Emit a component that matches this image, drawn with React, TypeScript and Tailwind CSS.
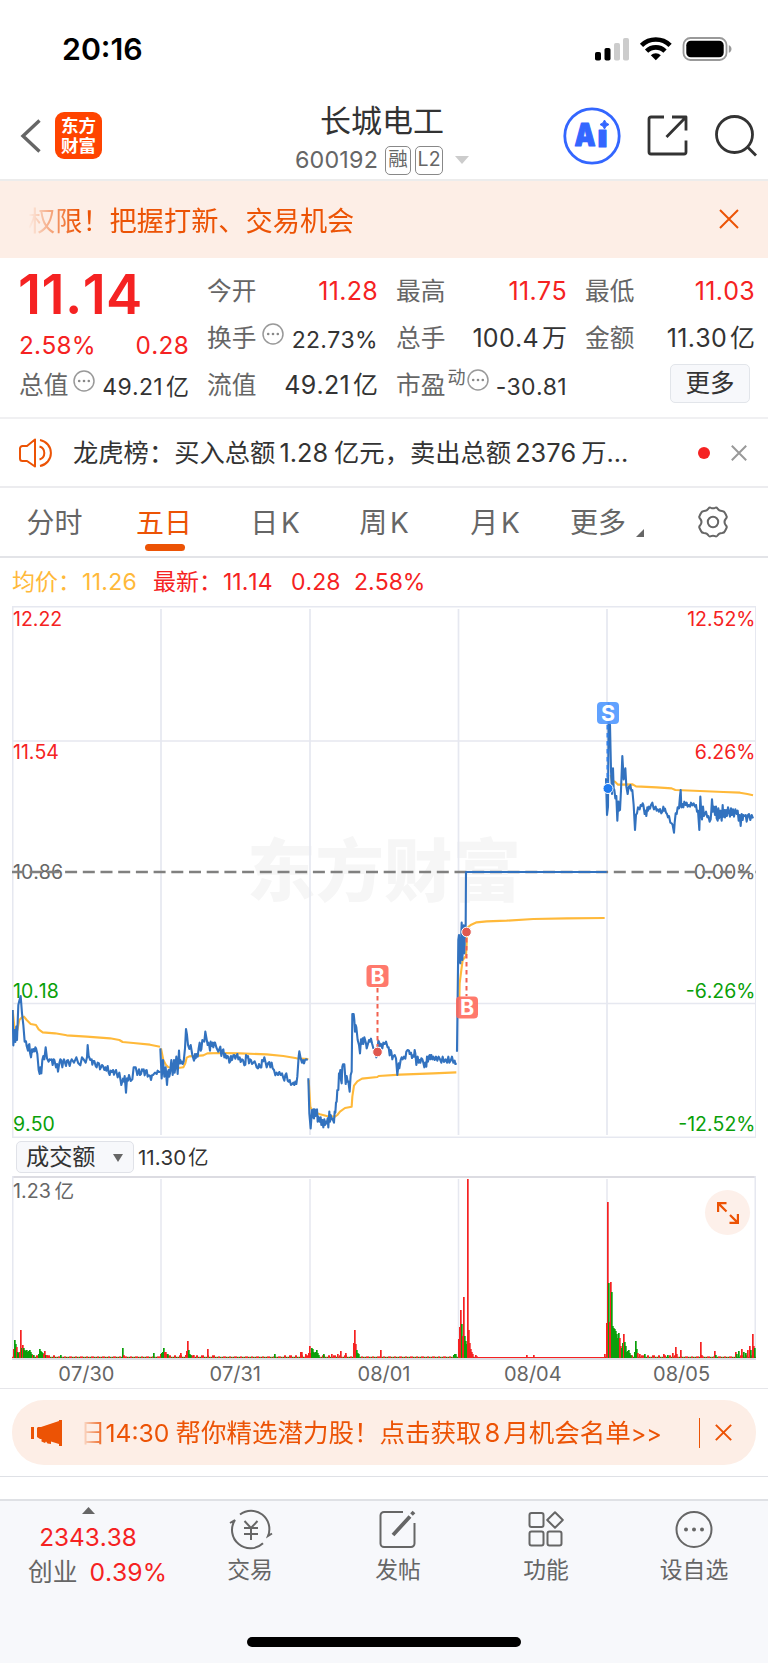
import type { ReactNode } from "react";

const tabs = [
  { label: "分时", width: "w-[109px]" },
  { label: "五日", width: "w-[110px]", active: true },
  { label: "日 K", width: "w-[112px]" },
  { label: "周 K", width: "w-[106px]" },
  { label: "月 K", width: "w-[116px]" },
];

const dates = ["07/30", "07/31", "08/01", "08/04", "08/05"];

// Each session is sampled on a grid of three units per pixel, from its own origin.
const sessions = [
  {
    origin: "translate(-12 374) scale(0.33333)",
    average:
      "38,90 44,150 52,150 58,120 66,112 72,110 80,120 92,132 108,135 116,148 128,157 165,160 200,166 260,170 330,175 358,180 368,186 400,189 450,194 480,200",
    price:
      "38,90 40,196 43,150 46,186 49,140 51,180 55,75 58,62 62,48 66,100 70,135 74,185 78,184 80,198 84,212 86,195 88,192 90,218 93,232 96,208 98,216 101,207 104,214 106,202 108,205 112,222 116,270 119,282 121,262 124,280 127,240 130,228 133,238 137,202 141,235 146,245 149,238 152,240 155,238 158,255 161,238 163,240 168,262 171,252 174,275 178,250 181,238 183,240 187,262 190,242 192,238 198,258 201,242 204,240 209,258 212,245 215,238 222,248 229,232 235,250 241,256 246,232 252,240 257,248 261,232 263,195 266,228 271,240 275,238 277,254 280,243 283,243 287,258 290,262 293,248 297,250 300,268 303,262 306,255 309,258 313,270 316,262 319,272 323,258 326,278 329,285 332,272 336,276 339,270 342,284 345,275 348,270 353,292 358,278 364,315 369,296 372,305 374,288 378,338 381,295 384,302 387,285 392,303 397,298 401,262 407,262 410,275 412,285 417,268 420,285 423,282 426,268 428,272 431,268 434,286 437,272 440,270 443,290 446,286 450,287 453,300 456,286 459,285 465,278 470,282 473,272 476,276 482,275",
  },
  {
    origin: "translate(-12 374) scale(0.33333)",
    average:
      "483,205 490,240 498,255 505,262 530,265 550,262 556,250 560,233 568,229 610,226 622,220 660,219 720,220 800,223 850,228 890,235 925,237",
    price:
      "481,205 485,295 489,240 493,290 497,262 501,315 504,275 506,270 508,290 510,280 514,240 516,262 518,285 522,240 524,278 526,262 529,230 533,282 537,212 539,250 541,240 543,250 546,245 548,252 551,245 555,205 558,147 561,165 564,195 568,207 572,195 577,225 582,242 585,222 587,235 590,222 593,230 596,205 599,188 602,212 604,208 607,180 609,182 613,185 616,155 620,178 623,195 625,188 628,198 630,212 632,185 635,198 638,188 640,202 643,188 645,188 650,205 655,215 661,200 664,228 667,212 670,208 673,232 676,222 679,235 682,228 685,230 688,248 691,244 693,228 696,240 700,226 703,225 706,236 709,228 712,222 715,238 719,232 722,246 726,238 729,240 733,256 736,254 738,225 741,232 744,228 747,250 750,238 753,240 756,252 760,248 764,244 767,252 770,262 774,265 777,252 781,262 784,262 786,240 790,244 793,232 797,248 800,262 804,250 808,246 811,262 815,248 818,265 822,270 826,286 830,278 834,285 838,276 842,285 846,280 850,294 853,302 856,285 859,280 863,302 866,305 869,300 873,315 877,312 880,308 883,315 886,305 889,312 892,290 896,230 898,214 902,235 906,248 909,240 912,250 915,240 918,238 923,240",
  },
  {
    origin: "translate(288 334) scale(0.33333)",
    average:
      "26,420 31,500 38,515 60,523 80,528 105,530 112,525 120,515 135,504 155,500 157,470 162,437 172,424 186,416 232,411 236,408 300,404 400,400 469,397",
    price:
      "25,415 28,520 32,565 36,510 38,532 40,508 42,535 44,508 46,528 48,512 51,508 53,545 55,530 59,545 62,532 64,555 67,540 70,562 73,538 75,555 78,545 80,550 83,535 85,562 88,515 90,545 92,525 95,538 97,535 102,548 104,515 106,518 108,488 110,485 112,450 115,450 117,400 119,405 121,390 123,420 125,430 127,380 129,373 133,373 135,400 137,432 140,408 143,425 145,424 149,455 152,405 155,395 157,222 161,222 163,240 165,275 167,255 169,262 173,300 177,315 180,340 183,298 185,312 188,295 190,312 193,292 198,310 200,325 203,315 207,300 210,305 213,296 216,310 220,325 225,328 229,352 233,325 235,302 238,308 240,318 243,312 247,325 250,308 254,312 258,305 263,322 266,322 269,346 272,330 274,335 277,358 279,350 284,345 288,355 292,405 296,370 298,385 302,360 305,352 308,358 312,350 316,356 319,335 323,330 327,332 329,342 333,338 336,354 340,345 342,350 344,330 346,340 349,375 353,350 356,368 358,360 361,368 364,355 367,358 370,368 373,382 376,368 379,380 381,350 384,365 386,350 389,345 391,358 394,345 397,358 400,350 404,360 408,350 412,362 416,350 420,358 424,368 428,350 432,366 437,358 441,368 445,350 448,368 452,362 456,350 460,368 464,362 466,372 470,370",
  },
  {
    origin: "translate(288 334) scale(0.33333)",
    average:
      "478,180 479,130 484,90 488,60 498,48 500,10 500,-35 512,-45 530,-53 560,-56 620,-58 700,-63 800,-65 914,-66",
    price:
      "471,335 475,0 477,-15 479,60 481,70 485,-52 487,60 489,20 491,-44 493,40 495,-20 497,-35 498,-204 920,-204",
  },
  {
    origin: "translate(578 84) scale(0.33333)",
    average:
      "62,255 66,272 75,275 84,284 128,283 138,289 200,292 245,295 256,300 330,303 400,306 450,308 472,312 489,316",
    price:
      "48,265 51,375 54,350 56,40 58,100 60,105 63,240 66,312 69,235 71,295 73,300 76,325 79,318 82,392 85,335 87,362 90,360 93,300 97,198 101,268 104,245 106,235 109,290 113,312 116,290 118,295 121,285 124,302 127,300 131,345 135,420 138,375 141,370 144,352 149,358 152,345 155,348 158,340 160,345 164,372 167,362 169,378 172,352 174,362 177,350 180,356 183,345 187,338 190,352 192,358 197,350 200,362 203,358 207,365 210,357 214,370 217,365 220,350 222,362 225,356 228,368 231,372 234,382 237,378 241,398 245,400 248,405 252,428 254,398 257,370 260,372 263,352 267,355 270,318 272,300 274,352 277,342 280,352 283,335 287,345 290,338 293,350 296,345 300,350 303,338 307,346 311,340 315,350 318,345 321,365 324,362 328,420 331,320 334,370 336,388 339,350 342,378 345,370 348,365 352,382 355,378 359,395 362,388 364,362 366,328 369,365 372,350 375,375 378,350 380,385 383,392 385,355 387,385 391,362 395,392 398,345 400,380 403,360 405,382 408,360 411,378 414,352 417,365 420,380 423,355 426,375 429,358 432,380 436,358 440,372 443,362 446,392 449,375 452,408 455,372 458,390 460,375 463,378 467,375 470,395 474,375 477,372 481,390 485,375 489,385",
  },
];

// [x, height, up?]
const spikes: [number, number, number][] = [
  [1, 9, 1], [2, 18, 0], [3, 14, 0], [4, 11, 1], [5, 6, 0], [6, 5, 0], [7, 6, 1], [8, 28, 1], [9, 10, 0], [10, 13, 1], [11, 10, 0], [12, 8, 0], [13, 7, 0], [14, 8, 0], [15, 6, 0], [16, 7, 0], [17, 8, 0], [18, 6, 0], [19, 4, 0], [20, 3, 1], [21, 3, 0],
  [26, 4, 0], [27, 9, 0], [28, 7, 0], [29, 6, 0], [30, 5, 0], [31, 4, 1], [32, 7, 1], [33, 3, 0], [34, 3, 1], [48, 3, 0], [110, 10, 0], [111, 3, 1], [141, 5, 0], [148, 4, 1], [149, 5, 0], [150, 6, 0], [151, 10, 0], [152, 6, 1], [153, 6, 1], [154, 4, 1], [155, 4, 0],
  [168, 5, 1], [173, 3, 1], [174, 7, 1], [175, 17, 1], [176, 8, 0], [177, 4, 0], [178, 3, 0], [181, 3, 1], [195, 9, 1], [262, 4, 0], [288, 6, 1], [289, 6, 1], [293, 4, 1], [296, 5, 1], [297, 12, 1], [298, 5, 1], [299, 10, 0], [300, 9, 0], [301, 6, 0], [302, 5, 0], [303, 6, 0], [304, 8, 0], [305, 5, 0], [306, 3, 0],
  [311, 4, 0], [319, 4, 1], [325, 4, 1], [328, 7, 1], [333, 5, 1], [341, 15, 1], [342, 28, 1], [343, 14, 1], [344, 8, 0], [345, 5, 0], [346, 4, 0], [368, 8, 1], [441, 3, 0], [442, 4, 0], [443, 4, 0],
  [446, 19, 1], [447, 31, 1], [448, 48, 1], [449, 34, 0], [450, 22, 1], [451, 61, 1], [452, 22, 0], [453, 17, 0], [454, 14, 0], [455, 179, 1], [456, 28, 1], [457, 15, 1], [458, 9, 1], [459, 6, 1], [460, 4, 1], [463, 3, 1],
  [514, 3, 1], [521, 3, 1], [592, 4, 1], [594, 35, 1], [595, 156, 1], [596, 75, 0], [597, 36, 1], [598, 76, 1], [599, 66, 0], [600, 32, 0], [601, 30, 0], [602, 29, 0], [603, 27, 0], [604, 24, 0], [605, 20, 0], [606, 25, 0], [607, 20, 1], [608, 12, 1], [609, 10, 0], [610, 15, 0], [611, 24, 1], [612, 16, 0], [613, 12, 0], [614, 6, 0], [615, 7, 0], [616, 8, 0], [617, 5, 0], [618, 3, 0],
  [622, 6, 0], [623, 17, 0], [624, 9, 0], [625, 5, 1], [627, 4, 1], [632, 4, 0], [651, 4, 1], [655, 3, 0], [660, 5, 1], [663, 11, 1], [664, 4, 1], [668, 8, 1], [688, 16, 1], [689, 3, 1], [702, 7, 1], [703, 3, 0], [723, 6, 1], [724, 4, 0], [726, 7, 0], [729, 9, 1], [731, 6, 0], [733, 5, 0], [735, 8, 1], [737, 12, 1], [738, 8, 0], [740, 24, 1], [741, 12, 1], [742, 10, 0],
];

const quiet = Array.from({ length: 744 }, (_, x) => {
  const wave = (x * 7919 + 13 * x * x) % 11;
  const frozen = x > 465 && x < 592;
  const busy = (x > 20 && x < 45) || (x > 150 && x < 205) || (x > 270 && x < 335) || (x > 594 && x < 665) || x > 722;
  return { x, h: frozen ? 1 : wave < 4 ? 1.2 : busy ? 2.7 : 1.6, up: frozen || wave % 2 === 0 };
});

function Dots() {
  return (
    <svg width="22" height="22" viewBox="0 0 22 22" fill="none" stroke="#999" strokeWidth="1.5">
      <circle cx="11" cy="11" r="10" />
      <g fill="#888" stroke="none">
        <circle cx="6.2" cy="11" r="1.3" />
        <circle cx="11" cy="11" r="1.3" />
        <circle cx="15.8" cy="11" r="1.3" />
      </g>
    </svg>
  );
}

function Cross({ size, color, width = 2 }: { size: number; color: string; width?: number }) {
  return (
    <svg width={size} height={size} viewBox="0 0 20 20" stroke={color} strokeWidth={(width * 20) / size}>
      <path d="M1 1 19 19M19 1 1 19" />
    </svg>
  );
}

type QuoteProps = { label: string; value: string; unit?: string; mark?: ReactNode; red?: boolean; small?: boolean };

function Quote({ label, value, unit, mark, red, small }: QuoteProps) {
  return (
    <div className="flex h-[47px] items-center justify-between">
      <span className="flex items-center text-[24.7px] text-[#666]">
        {label}
        {mark}
      </span>
      <span className={`${small ? "pt-1 text-[23px]" : "text-[25px]"} ${red ? "text-[#f52222]" : "text-[#333]"} -mr-px flex items-center`}>
        <span className="tracking-[0.3px]">{value}</span>
        {unit && <span className="ml-[3px]">{unit}</span>}
      </span>
    </div>
  );
}

function Marker({ x, y, letter, color }: { x: number; y: number; letter: string; color: string }) {
  return (
    <g>
      <rect x={x} y={y} width="22" height="22" rx="4" fill={color} fillOpacity="0.9" />
      <text x={x + 11} y={y + 18.5} textAnchor="middle" fontSize="21.5" fontWeight="700" fill="#fff">
        {letter}
      </text>
    </g>
  );
}

function StatusBar() {
  return (
    <div className="flex h-[90px] items-center justify-between pt-[7px] pr-[36px] pl-[62px]">
      <span className="pt-[2px] text-[30.3px] font-semibold text-black">20:16</span>
      <svg width="137" height="26" viewBox="0 0 137 26">
        <rect x="0" y="16" width="6" height="8.5" rx="1.8" />
        <rect x="9.5" y="12" width="6" height="12.5" rx="1.8" />
        <rect x="19" y="7" width="6" height="17.5" rx="1.8" fill="#ccc" />
        <rect x="28" y="2" width="6" height="22.5" rx="1.8" fill="#ccc" />
        <g fill="none" stroke="#000" strokeWidth="4.6">
          <path d="M46.5 9.3a20.5 20.5 0 0 1 28.6 0" />
          <path d="M51.6 15.2a13 13 0 0 1 18.4 0" />
        </g>
        <path d="M60.8 24.3 55.8 19.2a7.3 7.3 0 0 1 10 0z" />
        <rect x="88.5" y="2" width="43" height="22" rx="7" fill="none" stroke="#999" strokeWidth="1.8" />
        <rect x="91.3" y="4.8" width="37.4" height="16.4" rx="4.5" />
        <path d="M133.8 9.2c3.6 1 3.6 6.6 0 7.6z" fill="#999" />
      </svg>
    </div>
  );
}

function Header() {
  return (
    <header className="flex h-[91px] items-center border-b-2 border-[#ececec] pt-[2px] pr-[11px] pl-[20px]">
      <svg width="21" height="36" viewBox="0 0 21 36" fill="none" stroke="#666" strokeWidth="3.4">
        <path d="M19.5 2.5 3 18 19.5 33.5" />
      </svg>
      <div className="ml-[14px] flex h-[47px] w-[47px] flex-col items-center justify-center rounded-[9px] bg-[#ff4400] text-[17.5px] leading-[20px] font-bold text-white">
        <span>东方</span>
        <span>财富</span>
      </div>
      <div className="ml-[191px] flex h-[89px] w-[178px] flex-col items-center pt-[11px]">
        <h1 className="text-[31px] leading-[38px] text-[#333]">长城电工</h1>
        <div className="flex h-[45px] items-center text-[#666]">
          <span className="mr-[7px] text-[23.3px] tracking-[0.2px]">600192</span>
          <span className="mr-[4px] flex h-[29px] w-[26px] items-center justify-center rounded-[5px] border-[1.5px] border-[#888] text-[19.5px]">融</span>
          <span className="mr-[12px] flex h-[29px] w-[28px] items-center justify-center rounded-[5px] border-[1.5px] border-[#888] text-[19.5px]">L2</span>
          <svg width="14" height="8" viewBox="0 0 14 8" fill="#ccc">
            <path d="M0 0h14L7 8z" />
          </svg>
        </div>
      </div>
      <svg className="ml-auto" width="58" height="58" viewBox="0 0 58 58" fill="#3366ff">
        <circle cx="29" cy="29" r="27.2" fill="none" stroke="#3366ff" strokeWidth="2.8" />
        <g fontWeight="900" stroke="#3366ff" strokeWidth="1.2" strokeLinejoin="round">
          <text x="11.5" y="39" fontSize="32" textLength="21" lengthAdjust="spacingAndGlyphs">
            A
          </text>
          <text x="34.5" y="39.5" fontSize="30" textLength="10" lengthAdjust="spacingAndGlyphs">
            ı
          </text>
        </g>
        <path d="M41.5 13q1 3.500 4.500 4.500-3.500 1-4.500 4.500-1-3.500-4.500-4.500 3.500-1 4.500-4.500z" stroke="#3366ff" />
      </svg>
      <svg className="ml-[26px]" width="41" height="41" viewBox="0 0 41 41" fill="none" stroke="#333" strokeWidth="2.8" strokeLinejoin="round">
        <path d="M17 2H4a2 2 0 0 0-2 2v33a2 2 0 0 0 2 2h33a2 2 0 0 0 2-2V25.500M25 2h14v13.500M38 3 19.500 22" />
      </svg>
      <svg className="ml-[27px]" width="42" height="42" viewBox="0 0 42 42" fill="none" stroke="#333" strokeWidth="2.8">
        <circle cx="19.5" cy="19.5" r="18" />
        <path d="M32 31.5 41 40.5" />
      </svg>
    </header>
  );
}

function Quotes() {
  return (
    <section className="grid h-[161px] grid-cols-[169px_170px_170px_169px] gap-x-[19px] border-b-2 border-[#f0f0f2] pt-[10px] pl-[19px]">
      <div className="text-[#f52222]">
        <div className="-ml-px flex h-[52px] items-center text-[54.5px] leading-[52px] font-semibold tracking-[0.4px]">11.14</div>
        <div className="flex h-[50px] items-center justify-between pt-[1px] text-[24.3px]">
          <span className="tracking-[0.3px]">2.58%</span>
          <span className="-mr-px tracking-[0.3px]">0.28</span>
        </div>
        <div className="-mt-[8px]">
          <Quote label="总值" value="49.21" unit="亿" small mark={<span className="mb-[9px] ml-[5px]"><Dots /></span>} />
        </div>
      </div>
      <div>
        <Quote label="今开" value="11.28" red />
        <Quote label="换手" value="22.73%" small mark={<span className="mb-[9px] ml-[6px]"><Dots /></span>} />
        <Quote label="流值" value="49.21" unit="亿" />
      </div>
      <div>
        <Quote label="最高" value="11.75" red />
        <Quote label="总手" value="100.4" unit="万" />
        <Quote
          label="市盈"
          value="-30.81"
          small
          mark={
            <span className="mb-[12px] ml-[2px] flex items-center text-[18px]">
              <span className="mb-[3px]">动</span>
              <span className="ml-[2px]"><Dots /></span>
            </span>
          }
        />
      </div>
      <div>
        <Quote label="最低" value="11.03" red />
        <Quote label="金额" value="11.30" unit="亿" />
        <button className="mt-[2px] mr-[4px] ml-auto flex h-[39px] w-[80px] items-center justify-center rounded-[5px] border-[1.5px] border-[#e2e5ea] bg-[#f7f8fb] text-[24.5px] text-[#333]">
          更多
        </button>
      </div>
    </section>
  );
}

function Chart() {
  return (
    <svg className="mx-[12px] block" width="744" height="532" viewBox="0 0 744 532">
      <text x="235" y="290" fontSize="68.5" fontWeight="900" fill="#f6f6f6">
        东方财富
      </text>
      <g fill="none" stroke="#e6e8f0" strokeWidth="1.5">
        <rect x="0.75" y="0.75" width="743" height="530.5" />
        <path d="M0 135H744M0 397.5H744M149 3V529M298 3V529M446.5 3V529M595 3V529" strokeWidth="1.7" />
      </g>
      <g fontSize="19.5">
        <text x="1" y="20" fill="#f52222">12.22</text>
        <text x="1" y="152.5" fill="#f52222">11.54</text>
        <text x="1" y="273" fill="#666">10.86</text>
        <text x="1" y="392" fill="#0a9f0a">10.18</text>
        <text x="1" y="524.5" fill="#0a9f0a">9.50</text>
        <g textAnchor="end">
          <text x="743.5" y="20" fill="#f52222">12.52%</text>
          <text x="743.5" y="152.5" fill="#f52222">6.26%</text>
          <text x="743.5" y="273" fill="#666">0.00%</text>
          <text x="743.5" y="392" fill="#0a9f0a">-6.26%</text>
          <text x="743.5" y="524.5" fill="#0a9f0a">-12.52%</text>
        </g>
      </g>
      <path d="M0 266H744" stroke="#80807f" strokeWidth="2.4" strokeDasharray="12 5.7" />
      {sessions.map((s, i) => (
        <g key={i} transform={s.origin} fill="none" strokeWidth="6.3" strokeLinejoin="round">
          <polyline points={s.average} stroke="#ffb93a" />
          <polyline points={s.price} stroke="#3272bf" />
        </g>
      ))}
      <g strokeWidth="2" strokeDasharray="4.5 3.5" stroke="#f2604f">
        <path d="M365.5 382V441M454.5 332V390" />
        <path d="M595.5 119V178" stroke="#2f7fe8" />
      </g>
      <g stroke="#fff" strokeWidth="1">
        <circle cx="365.5" cy="446" r="4.8" fill="#e0584f" />
        <circle cx="454.5" cy="326" r="4.8" fill="#e0584f" />
        <circle cx="596" cy="182.5" r="5" fill="#1f7bf0" />
      </g>
      <Marker x={354.5} y={359} letter="B" color="#ff6a5c" />
      <Marker x={444} y={390.5} letter="B" color="#ff6a5c" />
      <Marker x={585} y={96} letter="S" color="#5098ff" />
    </svg>
  );
}

function Volume() {
  return (
    <div className="relative mx-[12px]">
      <svg className="block" width="744" height="184" viewBox="0 0 744 184">
        <path d="M0 1H744M0 183H744" stroke="#dcdce2" strokeWidth="2" />
        <path d="M.75 0V183M743.25 0V183M149 3V181M298 3V181M446.5 3V181M595 3V181" stroke="#e6e8f0" strokeWidth="1.5" />
        <text x="1" y="22" fontSize="19.7" fill="#666" className="[word-spacing:-2px]">
          1.23 亿
        </text>
        {quiet.map((b) => (
          <rect key={b.x} x={b.x} y={182 - b.h} width="1" height={b.h} fill={b.up ? "#f52222" : "#0a9f0a"} />
        ))}
        {spikes.map(([x, h, up]) => (
          <rect key={x} x={x} y={182 - h} width="1.7" height={h} fill={up ? "#f52222" : "#0a9f0a"} />
        ))}
      </svg>
      <button className="absolute top-[14px] right-[6px] flex h-[45px] w-[45px] items-center justify-center rounded-full bg-[#fdf0ea]">
        <svg width="22" height="22" viewBox="0 0 22 22" fill="none" stroke="#ec5305" strokeWidth="2.2">
          <path d="M9.5 1.1H1.1V10M1.1 1.1 9.5 9.5M12.5 20.9h8.4V12M20.9 20.9 13 13" />
        </svg>
      </button>
    </div>
  );
}

function Tool({ label, children }: { label: string; children: ReactNode }) {
  return (
    <div className="flex w-[148px] flex-col items-center pt-[6px]">
      <svg width="46" height="45" viewBox="0 0 46 45" fill="none" stroke="#666" strokeWidth="2">
        {children}
      </svg>
      <span className="mt-[1px] text-[22.8px] leading-[34px]">{label}</span>
    </div>
  );
}

function TabBar() {
  return (
    <footer className="flex h-[165px] flex-col bg-[#f7f8fb]">
      <div className="flex h-[103px] border-t-2 border-[#dfe1e5] text-[#666]">
        <div className="flex w-[176px] flex-col items-center pt-[6px]">
          <svg width="13" height="7" viewBox="0 0 13 7" fill="#666">
            <path d="M0 7h13L6.5 0z" />
          </svg>
          <span className="mt-[6px] text-[24.3px] leading-[34px] text-[#f52222]">2343.38</span>
          <span className="mt-[1px] flex w-full items-center pl-[28px] text-[24.7px] leading-[34px]">
            创业<span className="ml-[12px] text-[24.7px] text-[#f52222]">0.39%</span>
          </span>
        </div>
        <Tool label="交易">
          <path d="M13 7.5A18.3 18.3 0 0 1 41 29L45 26.5M36 36.200A18.300 18.300 0 0 1 8 13L3 16" />
          <path d="m17.5 14 6.5 7 6.5-7M17 21h14M17 27h14M24 21v12" />
        </Tool>
        <Tool label="发帖">
          <path d="M28 5H9a3.500 3.500 0 0 0-3.500 3.500v28A3.500 3.500 0 0 0 9 40h27a3.500 3.500 0 0 0 3.500-3.500V16" />
          <path d="m18 28 17-18.5M36.5 7.5l2.5-2.5" strokeWidth="3.8" />
        </Tool>
        <Tool label="功能">
          <rect x="6.5" y="6" width="14" height="14" rx="2" />
          <rect x="6.5" y="24.5" width="14" height="14" rx="2" />
          <rect x="24.5" y="24.5" width="14" height="14" rx="2" />
          <path d="m32 5.200 7.800 7.800-7.800 7.800-7.800-7.800z" strokeLinejoin="round" />
        </Tool>
        <Tool label="设自选">
          <circle cx="23" cy="22.5" r="17.5" />
          <g fill="#666" stroke="none">
            <circle cx="15" cy="22.5" r="2" />
            <circle cx="23" cy="22.5" r="2" />
            <circle cx="31" cy="22.5" r="2" />
          </g>
        </Tool>
      </div>
      <div className="mt-[35px] h-[10px] w-[274px] self-center rounded-full bg-black" />
    </footer>
  );
}

export default function App() {
  return (
    <div className="h-[1663px] w-[768px] overflow-hidden bg-white font-['Inter','Noto_Sans_CJK_SC',sans-serif] leading-none whitespace-nowrap [font-kerning:none]">
      <StatusBar />
      <Header />
      <div className="flex h-[77px] items-center justify-between bg-[#fdeee6] pr-[29px] pl-[28px] text-[27.2px] text-[#ec5305]">
        <span className="pt-[5px] [mask-image:linear-gradient(to_right,transparent,black_50px)]">权限！把握打新、交易机会</span>
        <span className="mb-[2px]">
          <Cross size={20} color="#ec5305" />
        </span>
      </div>
      <Quotes />
      <div className="flex h-[69px] items-center border-b-2 border-[#ececef] text-[25.3px] text-[#333]">
        <svg className="ml-[19px]" width="35" height="32" viewBox="0 0 35 32" fill="none" stroke="#ec5305" strokeWidth="2" strokeLinejoin="round">
          <path d="M16 2.500v27L8 24H3.500A2.500 2.500 0 0 1 1 21.500v-10A2.500 2.500 0 0 1 3.500 9H8zM20.500 9.500a6.800 6.800 0 0 1 0 13M21 3a13.200 13.200 0 0 1 0 26" />
        </svg>
        <span className="ml-[19px]">龙虎榜：买入总额</span>
        <span className="mr-[6px] ml-[4px]">1.28</span>
        <span>亿元，卖出总额</span>
        <span className="mr-[5px] ml-[4px]">2376</span>
        <span>万...</span>
        <span className="mr-[21px] ml-auto h-[12px] w-[12px] rounded-full bg-[#f52222]" />
        <span className="mr-[21px]">
          <Cross size={16} color="#999" />
        </span>
      </div>
      <nav className="flex h-[70px] items-center border-b-2 border-[#e3e4e8] text-[28px] text-[#666] [word-spacing:-5px]">
        {tabs.map((tab) => (
          <div key={tab.label} className={`${tab.width} ${tab.active ? "text-[#ec5305]" : ""} relative flex justify-center pt-[2px]`}>
            {tab.label}
            {tab.active && <span className="absolute top-[37px] h-[7px] w-[40px] translate-x-px rounded-full bg-[#ec5305]" />}
          </div>
        ))}
        <span className="ml-[17px] pt-[2px]">更多</span>
        <svg className="mt-[22px] ml-[10px]" width="8" height="8" viewBox="0 0 8 8" fill="#666">
          <path d="M8 0v8H0z" />
        </svg>
        <svg className="ml-[52px]" width="34" height="34" viewBox="0 0 34 34" fill="none" stroke="#666" strokeWidth="2" strokeLinejoin="round">
          <path d="M12.500 3.500q1-1.500 2.500-.700 2 1 4 0 1.500-.800 2.500.700 1.500 2.500 4.500 2.500 2.200.100 3 2l1.500 3q.700 1.300-.500 2.500-3 3.500 0 7 1.200 1.200.500 2.500l-1.500 3q-.800 1.900-3 2-3 0-4.500 2.500-1 1.500-2.500.700-2-1-4 0-1.500.800-2.500-.700-1.500-2.500-4.500-2.500-2.200-.100-3-2l-1.500-3q-.700-1.300.500-2.500 3-3.500 0-7-1.200-1.200-.500-2.500l1.500-3q.800-1.900 3-2 3 0 4.500-2.500z" />
          <circle cx="17" cy="17" r="5.2" />
        </svg>
      </nav>
      <div className="flex h-[48px] items-center pt-[1px] pl-[12px] text-[23px] text-[#f52222]">
        <span className="text-[#ffb93a]">均价：</span>
        <span className="ml-[1px] w-[71px] tracking-[0.3px] text-[#ffb93a]">11.26</span>
        <span>最新：</span>
        <span className="ml-[1px] w-[68px]">11.14</span>
        <span className="w-[63px]">0.28</span>
        <span>2.58%</span>
      </div>
      <Chart />
      <div className="flex h-[38px] items-center pl-[16px] text-[#333]">
        <button className="flex h-[32px] w-[118px] items-center justify-between rounded-[5px] border-[1.5px] border-[#e0e2e8] bg-[#f7f8fb] pt-[2px] pr-[10px] pl-[9px] text-[23.2px]">
          成交额
          <svg width="10" height="8" viewBox="0 0 10 8" fill="#666">
            <path d="M0 0h10L5 8z" />
          </svg>
        </button>
        <span className="ml-[4px] pt-[2px] text-[20.5px] [word-spacing:-4px]">11.30 亿</span>
      </div>
      <Volume />
      <div className="flex h-[29px] items-center border-b-[1.5px] border-[#e6e6ea] px-[12px] text-[20px] text-[#666]">
        {dates.map((d) => (
          <span key={d} className="flex-1 text-center">
            {d}
          </span>
        ))}
      </div>
      <div className="flex h-[88px] items-center border-b border-[#dfe1e6] px-[12px]">
        <div className="flex h-[65px] w-full items-center rounded-[32px] bg-[#fdeee6] pr-[24px] pl-[19px] text-[25.5px] text-[#ec5305]">
          <svg width="32" height="26" viewBox="0 0 32 26" fill="#ec5305">
            <path d="M0 7h3v12H0zM7 7h3L28 1V0h3v26h-3v-2l-8-2.5V24l-3.5-.5-1.5-2-1 1.5-3.5-1.5V19H9l-3-2V8z" />
          </svg>
          <span className="ml-[17px] [mask-image:linear-gradient(to_right,transparent,black_26px)]">
            日<span className="mr-[6px] text-[24.7px]">14:30</span>帮你精选潜力股！点击获取<span className="mx-[3px]">8</span>月机会名单<span className="text-[23.5px]">&gt;&gt;</span>
          </span>
          <span className="mr-[15px] ml-auto h-[30px] w-[1.5px] bg-[#ec5305]" />
          <Cross size={17} color="#ec5305" />
        </div>
      </div>
      <div className="h-[22px]" />
      <TabBar />
    </div>
  );
}
